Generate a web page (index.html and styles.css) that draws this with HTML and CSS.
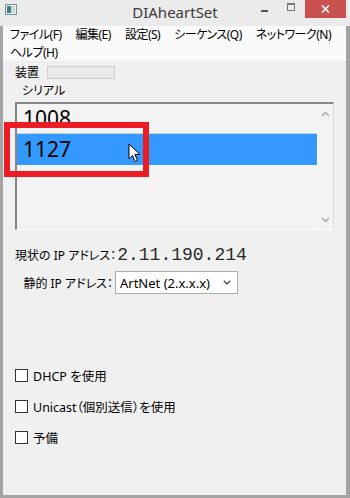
FILE: index.html
```html
<!DOCTYPE html>
<html lang="ja">
<head>
    <meta charset="UTF-8">
    <meta name="viewport" content="width=device-width, initial-scale=1.0">
    <title>DIAheartSet</title>
    <link rel="stylesheet" href="styles.css">
</head>
<body>
    <div class="window">
        <div class="titlebar">
            <svg class="app-icon" width="12" height="11" viewBox="0 0 12 11">
                <rect x="0.5" y="0.5" width="11" height="10" fill="#e8eeee" stroke="#7d8f92"/>
                <rect x="2" y="2" width="4" height="7" fill="#3f7f86"/>
                <rect x="6" y="2" width="4" height="7" fill="#cfd9da"/>
            </svg>
            <div class="title">DIAheartSet</div>
            <div class="controls">
                <span class="ctl-min"></span>
                <span class="ctl-max"></span>
                <span class="ctl-close">
                    <svg width="9" height="8" viewBox="0 0 9 8">
                        <path d="M1 0.5 L8 7.5 M8 0.5 L1 7.5" stroke="#fff" stroke-width="1.6"/>
                    </svg>
                </span>
            </div>
        </div>
        <div class="frame">
            <div class="menubar">
                <div class="menu-row">
                    <span class="menu-item">ファイル(F)</span>
                    <span class="menu-item">編集(E)</span>
                    <span class="menu-item">設定(S)</span>
                    <span class="menu-item">シーケンス(Q)</span>
                    <span class="menu-item">ネットワーク(N)</span>
                </div>
                <div class="menu-row">
                    <span class="menu-item">ヘルプ(H)</span>
                </div>
            </div>
            <div class="client">
                <div class="device-row">
                    <span class="label">装置</span>
                    <span class="device-box"></span>
                </div>
                <div class="serial-label">シリアル</div>
                <div class="listbox">
                    <div class="list-items">
                        <div class="list-item">1008</div>
                        <div class="list-item selected">1127</div>
                    </div>
                    <div class="scrollbar">
                        <svg width="9" height="6" viewBox="0 0 9 6"><path d="M1 5 L4.5 1.5 L8 5" fill="none" stroke="#a6a6a6" stroke-width="1.4"/></svg>
                        <svg width="9" height="6" viewBox="0 0 9 6"><path d="M1 1 L4.5 4.5 L8 1" fill="none" stroke="#a6a6a6" stroke-width="1.4"/></svg>
                    </div>
                </div>
                <div class="ip-row">
                    <span class="label">現状の IP アドレス：</span>
                    <span class="ip-value">2.11.190.214</span>
                </div>
                <div class="static-row">
                    <span class="label">静的 IP アドレス：</span>
                    <div class="select">
                        <span>ArtNet (2.x.x.x)</span>
                        <svg width="8" height="5" viewBox="0 0 8 5"><path d="M0.8 0.8 L4 4 L7.2 0.8" fill="none" stroke="#444" stroke-width="1.3"/></svg>
                    </div>
                </div>
                <div class="checks">
                    <label class="check"><span class="box"></span>DHCP を使用</label>
                    <label class="check"><span class="box"></span>Unicast（個別送信）を使用</label>
                    <label class="check"><span class="box"></span>予備</label>
                </div>
            </div>

            <!-- 強調枠とカーソル -->
            <div class="highlight"></div>
            <svg class="cursor" width="13" height="20" viewBox="0 0 13 20">
                <path d="M1 1 L1 16 L4.5 12.5 L7 18.5 L9.5 17.5 L7 11.5 L12 11.5 Z" fill="#fff" stroke="#000" stroke-width="1" stroke-linejoin="round"/>
            </svg>
        </div>
    </div>
</body>
</html>
```

FILE: styles.css
```css
body {
    margin: 0;
    background: #a4a4a4;
    font-family: "Noto Sans", "Noto Sans CJK JP", sans-serif;
    font-feature-settings: "palt";
    color: #000;
}
.window {
    width: 350px;
    height: 498px;
    display: flex;
    flex-direction: column;
    overflow: hidden;
}
.titlebar {
    height: 26px;
    background: #ebebeb;
    position: relative;
    flex-shrink: 0;
}
.app-icon {
    position: absolute;
    left: 5px;
    top: 4px;
}
.title {
    text-align: center;
    font-size: 15px;
    line-height: 24px;
    color: #3a3a3a;
}
.controls {
    position: absolute;
    right: 4px;
    top: 0;
    display: flex;
    align-items: flex-start;
}
.ctl-min {
    width: 7px;
    height: 2px;
    background: #555;
    margin: 10px 19px 0 0;
}
.ctl-max {
    width: 6px;
    height: 5px;
    border: 1px solid #777;
    border-top-width: 2px;
    margin: 3px 10px 0 0;
}
.ctl-close {
    width: 41px;
    height: 18px;
    background: #c9524f;
    display: flex;
    align-items: center;
    justify-content: center;
}
.frame {
    flex: 1;
    border: 3px solid #a4a4a4;
    border-top: none;
    border-right-width: 4px;
    display: flex;
    flex-direction: column;
    position: relative;
}
.menubar {
    background: #fafafa;
    height: 35px;
    border-bottom: 1px solid #ececec;
    font-size: 12px;
    line-height: 18px;
    letter-spacing: -0.5px;
    overflow: hidden;
}
.menu-row {
    display: flex;
    white-space: nowrap;
}
.menu-item {
    padding: 0 7px;
}
.client {
    flex: 1;
    background: #f0f0f0;
    padding: 0 0 0 12px;
    font-size: 12px;
}
.device-row {
    display: flex;
    align-items: center;
    height: 16px;
    margin-top: 2px;
}
.device-box {
    width: 66px;
    height: 11px;
    margin-left: 8px;
    background: #e9e9e9;
    border: 1px solid #cdcdcd;
}
.serial-label {
    margin: 3px 0 0 7px;
    line-height: 16px;
}
.listbox {
    width: 316px;
    height: 125px;
    margin-top: 3px;
    background: #f3f3f3;
    border-top: 2px solid #868686;
    border-left: 2px solid #868686;
    border-right: 1px solid #dcdcdc;
    border-bottom: 1px solid #ffffff;
    display: flex;
}
.list-items {
    flex: 1;
}
.list-item {
    font-size: 21px;
    line-height: 29px;
    padding-left: 6px;
}
.list-item.selected {
    background: #3399ff;
    border-top: 1px solid #b9d8cf;
    line-height: 31px;
}
.scrollbar {
    width: 15px;
    border-left: 1px solid #fbfbfb;
    display: flex;
    flex-direction: column;
    justify-content: space-between;
    align-items: center;
    padding: 7px 0 6px;
}
.ip-row {
    display: flex;
    align-items: center;
    height: 20px;
    margin-top: 15px;
}
.ip-value {
    font-family: "Liberation Mono", monospace;
    font-size: 18px;
    color: #2a2a2a;
    margin-left: 1px;
}
.static-row {
    display: flex;
    align-items: center;
    margin-top: 6px;
}
.static-row .label {
    width: 98px;
    text-align: right;
}
.select {
    height: 21px;
    width: 111px;
    margin-left: 2px;
    background: #fff;
    border: 1px solid #acacac;
    display: flex;
    align-items: center;
    justify-content: space-between;
    padding: 0 6px 0 4px;
    font-size: 13px;
}
.checks {
    margin-top: 73px;
    display: flex;
    flex-direction: column;
    gap: 15px;
}
.check {
    display: flex;
    align-items: center;
    height: 16px;
    font-size: 12.5px;
}
.box {
    width: 11px;
    height: 11px;
    border: 1px solid #333;
    background: #fff;
    margin-right: 5px;
}
.highlight {
    position: absolute;
    left: 1px;
    top: 96px;
    width: 133px;
    height: 43px;
    border: 6px solid #ec1c24;
}
.cursor {
    position: absolute;
    left: 125px;
    top: 117px;
}
```
